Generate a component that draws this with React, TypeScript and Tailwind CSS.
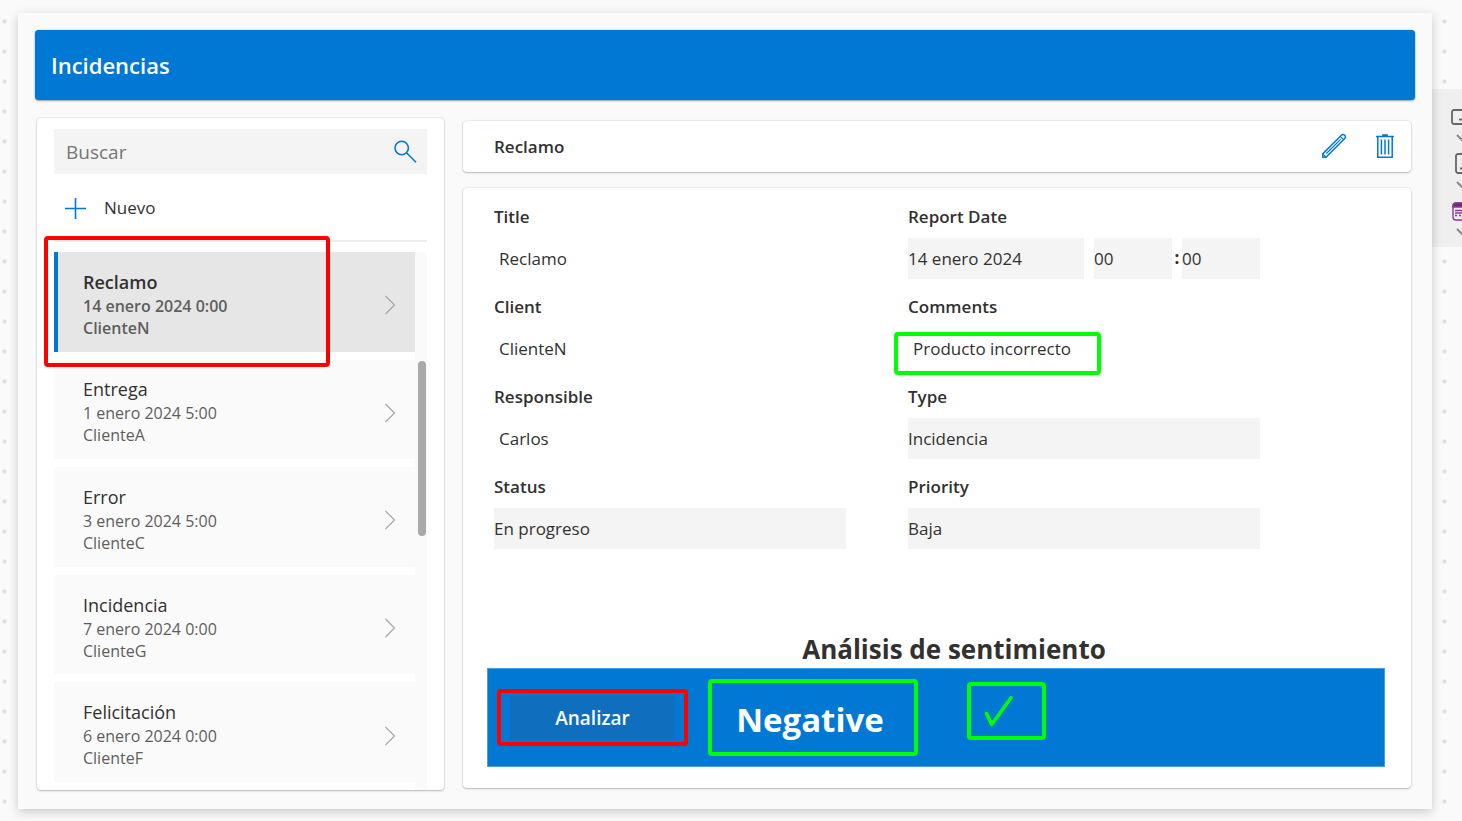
import React, { useState } from "react";

const incidents = [
  { title: "Reclamo", date: "14 enero 2024 0:00", client: "ClienteN" },
  { title: "Entrega", date: "1 enero 2024 5:00", client: "ClienteA" },
  { title: "Error", date: "3 enero 2024 5:00", client: "ClienteC" },
  { title: "Incidencia", date: "7 enero 2024 0:00", client: "ClienteG" },
  { title: "Felicitación", date: "6 enero 2024 0:00", client: "ClienteF" },
];

const card =
  "rounded bg-white shadow-[0_0_2px_rgba(0,0,0,0.18),0_1px_2px_rgba(0,0,0,0.22)]";
const labelText = "block text-[17px] leading-6 font-semibold text-[#323130]";
const valueBase =
  "block h-[41px] w-full min-w-0 appearance-none text-[17px] leading-6 text-[#323130] outline-none";

function Field({ id, label, value, className = "" }: { id: string; label: string; value: string; className?: string }) {
  return (
    <div className={className}>
      <label htmlFor={id} className={labelText}>{label}</label>
      <input id={id} readOnly value={value} className={`${valueBase} mt-[9px] bg-transparent pl-[5px]`} />
    </div>
  );
}

function Choice({ id, label, value }: { id: string; label: string; value: string }) {
  return (
    <div>
      <label htmlFor={id} className={labelText}>{label}</label>
      <select id={id} className={`${valueBase} mt-[9px] bg-[#f4f4f4]`}>
        <option>{value}</option>
      </select>
    </div>
  );
}

function SearchIcon() {
  return (
    <svg width="24" height="24" viewBox="0 0 24 24" fill="none" stroke="#0078d4" strokeWidth="1.6" aria-hidden="true">
      <circle cx="8.7" cy="8" r="6.7" />
      <path d="M13.5 12.8 23 22.3" />
    </svg>
  );
}

function PencilIcon() {
  return (
    <svg width="26" height="26" viewBox="0 0 26 26" fill="none" stroke="#0078d4" strokeWidth="1.5" strokeLinejoin="round" aria-hidden="true">
      <path d="M1.7 24.3V20.9L20.4 2.2a2.2 2.2 0 0 1 3.3 0 2.2 2.2 0 0 1 0 3.3L5 24.3Z" />
      <path d="M2 21.2 4.8 24M19.2 3.4 22.5 6.7M5.4 20.5 19.6 6.4" strokeWidth="1.2" />
    </svg>
  );
}

function TrashIcon() {
  return (
    <svg width="20" height="26" viewBox="0 0 20 26" fill="none" stroke="#0078d4" strokeWidth="1.5" aria-hidden="true">
      <path d="M1 3.5H19M2.8 3.5V24.2H17.2V3.5" />
      <path d="M7.2 1.2H12.8V3.5H7.2Z" fill="#0078d4" stroke="none" />
      <path d="M6.4 6.5V21.5M10 6.5V21.5M13.6 6.5V21.5" />
    </svg>
  );
}

function SmallChevron() {
  return (
    <svg width="12" height="8" viewBox="0 0 12 8" fill="none" stroke="#8a8a8a" strokeWidth="2" className="ml-6 shrink-0" aria-hidden="true">
      <path d="M1 1 6 6 11 1" />
    </svg>
  );
}

function DeviceRail() {
  return (
    <aside className="mt-[76px] flex h-[158px] w-[30px] shrink-0 flex-col overflow-hidden bg-[#efefef] pt-5">
      <svg width="22" height="16" viewBox="0 0 22 16" fill="none" stroke="#666" strokeWidth="1.8" className="ml-[19px] shrink-0" aria-hidden="true">
        <rect x="1" y="1" width="20" height="14" rx="2" />
        <path d="M8 10.5H14" />
      </svg>
      <div className="mt-[9px]"><SmallChevron /></div>
      <svg width="15" height="21" viewBox="0 0 15 21" fill="none" stroke="#666" strokeWidth="1.8" className="mt-[11px] ml-[23px] shrink-0" aria-hidden="true">
        <rect x="1" y="1" width="13" height="19" rx="2" />
        <path d="M5 15.5H10" />
      </svg>
      <div className="mt-[7px]"><SmallChevron /></div>
      <svg width="20" height="19" viewBox="0 0 20 19" fill="none" stroke="#8b3d94" strokeWidth="1.4" className="mt-[13px] ml-5 shrink-0" aria-hidden="true">
        <rect x="1" y="1" width="18" height="17" rx="3" fill="#f5e9f6" />
        <path d="M1 5V4Q1 1 4 1H16Q19 1 19 4V5Z" fill="#742774" />
        <path d="M3 8.5H10M3 11H10M3 13.5H5M7 13.5H9" />
      </svg>
      <div className="mt-[7px]"><SmallChevron /></div>
    </aside>
  );
}

export default function App() {
  const [selected, setSelected] = useState(0);

  return (
    <div className="flex min-h-screen bg-[#fafafa] bg-[radial-gradient(circle_at_4.5px_21.5px,#dedede_0,#dedede_1.5px,transparent_2.5px)] bg-[size:30px_30px] pt-[13px] pb-3 pl-[18px] font-['Open_Sans','Noto_Sans',sans-serif] text-[#323130]">
      <main className="relative flex min-w-0 flex-1 flex-col bg-[#fafafa] px-[17px] pt-[17px] pb-[19px] shadow-[0_3px_10px_rgba(0,0,0,0.2)]">
        <header className="flex h-[70px] items-center rounded bg-[#0078d4] px-4 shadow-[0_0_1px_rgba(0,120,212,0.8),0_1px_2px_rgba(0,0,0,0.35)]">
          <h1 className="text-[22px] leading-8 font-semibold text-white">Incidencias</h1>
        </header>

        <div className="mt-[18px] mr-1 ml-0.5 flex flex-1 gap-[19px]">
          <section className={`${card} flex w-[407px] shrink-0 flex-col px-[17px] pt-[11px]`}>
            <div className="flex h-[45px] items-center bg-[#f4f4f4] pr-[10px] pl-3">
              <input aria-label="Buscar" placeholder="Buscar" className="min-w-0 flex-1 bg-transparent text-[19px] leading-6 outline-none placeholder:text-[#767676]" />
              <button aria-label="Buscar incidencias"><SearchIcon /></button>
            </div>
            <button className="mt-[18px] flex h-8 items-center gap-[18px] pl-[11px] text-[17px] leading-6">
              <svg width="21" height="21" viewBox="0 0 21 21" stroke="#0078d4" strokeWidth="1.6" aria-hidden="true"><path d="M10.5 0V21M0 10.5H21" /></svg>
              Nuevo
            </button>
            <div className="mt-4 h-0.5 bg-[#ededed]" />
            <div className="relative mt-[10px] flex flex-1">
              <ul className="flex min-w-0 flex-1 flex-col">
                {incidents.map((item, i) => (
                  <li key={item.title} className="flex flex-1 pb-2">
                    <button
                      onClick={() => setSelected(i)}
                      className={`flex w-full items-center justify-between border-l-4 pr-[19px] pl-[25px] text-left ${
                        selected === i ? "border-[#0078d4] bg-[#e6e6e6] font-semibold" : "border-[#fafafa] bg-[#fafafa]"
                      }`}
                    >
                      <span className="mt-[5px] flex flex-col">
                        <span className="text-[18px] leading-[25px]">{item.title}</span>
                        <span className="text-[16px] leading-[22px] text-[#605e5c]">{item.date}</span>
                        <span className="text-[16px] leading-[22px] text-[#605e5c]">{item.client}</span>
                      </span>
                      <svg width="12" height="20" viewBox="0 0 12 20" fill="none" stroke="#a6a6a6" strokeWidth="1.2" className="mt-[7px]" aria-hidden="true"><path d="M1.5 1 10.5 10 1.5 19" /></svg>
                    </button>
                  </li>
                ))}
              </ul>
              <div className="w-3 bg-[#fafafa] pt-[109px] pr-px pl-[3px]">
                <div className="h-[175px] rounded-full bg-[#a9a9a9]" />
              </div>
              <div className="pointer-events-none absolute -top-4 -left-[10px] h-[131px] w-[286px] rounded-sm border-4 border-[#ff0000]" />
            </div>
          </section>

          <div className="flex min-w-0 flex-1 flex-col pt-[3px] pb-0.5">
            <section className={`${card} flex h-[51px] items-center pr-[16px] pl-[31px]`}>
              <h2 className="flex-1 text-[17px] leading-6 font-semibold">Reclamo</h2>
              <button aria-label="Editar" className="mr-[28px] mb-0.5"><PencilIcon /></button>
              <button aria-label="Eliminar" className="mb-0.5"><TrashIcon /></button>
            </section>

            <section className={`${card} mt-4 flex flex-1 flex-col pt-[17px] pb-[21px]`}>
              <form className="mr-[151px] ml-[31px] grid grid-cols-2 gap-x-[62px] gap-y-4">
                <Field id="title" label="Title" value="Reclamo" />
                <fieldset className="min-w-0">
                  <legend className={labelText}>Report Date</legend>
                  <div className="mt-[9px] flex">
                    <input aria-label="Fecha" readOnly value="14 enero 2024" className={`${valueBase} mr-[10px] flex-[176] bg-[#f4f4f4]`} />
                    <select aria-label="Hora" className={`${valueBase} flex-[78] bg-[#f4f4f4]`}><option>00</option></select>
                    <span className="w-[10px] pt-2 text-center text-[17px] leading-6 font-bold">:</span>
                    <select aria-label="Minutos" className={`${valueBase} flex-[78] bg-[#f4f4f4]`}><option>00</option></select>
                  </div>
                </fieldset>
                <Field id="client" label="Client" value="ClienteN" />
                <div className="relative">
                  <Field id="comments" label="Comments" value="Producto incorrecto" />
                  <div className="pointer-events-none absolute top-[37px] -left-[14px] h-[43px] w-[207px] rounded-sm border-4 border-[#00ff00]" />
                </div>
                <Field id="responsible" label="Responsible" value="Carlos" />
                <Choice id="type" label="Type" value="Incidencia" />
                <Choice id="status" label="Status" value="En progreso" />
                <Choice id="priority" label="Priority" value="Baja" />
              </form>

              <div className="mt-auto mr-[26px] ml-6">
                <h3 className="pl-9 text-center text-[26px] leading-9 font-bold">Análisis de sentimiento</h3>
                <div className="mt-px flex h-[99px] items-start border border-[#4ba0e1] bg-[#0078d4] pl-[9px]">
                  <div className="mt-5 rounded-sm border-4 border-[#ff0000] px-[9px] py-[3px]">
                    <button className="h-[43px] w-[165px] bg-[#106ebe] text-[19px] leading-6 font-semibold text-white">Analizar</button>
                  </div>
                  <output className="mt-[10px] ml-5 flex h-[77px] w-[210px] items-center justify-center rounded-sm border-4 border-[#00ff00] pt-1 pr-1.5 text-[33px] leading-10 font-bold text-white">Negative</output>
                  <div className="mt-[13px] ml-[49px] h-[58px] w-[79px] rounded-sm border-4 border-[#00ff00] pt-[9px] pl-[13px]">
                    <svg width="30" height="34" viewBox="0 0 30 34" fill="none" stroke="#00ff00" strokeWidth="3.6" strokeLinecap="round" strokeLinejoin="round" role="img" aria-label="Correcto"><path d="M2.5 18.5 7.7 29.5 27 2.8" /></svg>
                  </div>
                </div>
              </div>
            </section>
          </div>
        </div>
      </main>
      <DeviceRail />
    </div>
  );
}
